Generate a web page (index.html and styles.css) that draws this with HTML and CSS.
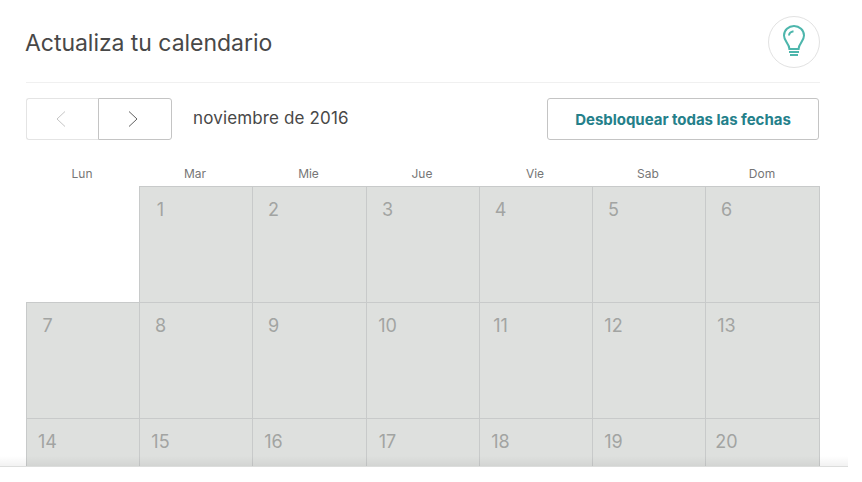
FILE: index.html
```html
<!DOCTYPE html>
<html lang="es">
<head>
<meta charset="utf-8">
<title>Actualiza tu calendario</title>
<link rel="stylesheet" href="styles.css">
</head>
<body>
<main class="panel">
  <header class="header">
    <h1 class="title"><span>Actualiza tu calendario</span></h1>
    <button class="tip" aria-label="Consejos">
      <svg width="24" height="34" viewBox="0 0 24 34" fill="none" stroke="#4db6ac" stroke-width="2">
        <path d="M7.400 25C7.200 19 2 17.500 2 11.500A10 9.500 0 0 1 22 11.500C22 17.500 16.800 19 16.600 25Z"/>
        <path d="M7 11.500Q7.300 8 11.500 7.300"/>
        <path d="M7 28H17M8 31H16"/>
      </svg>
    </button>
  </header>
  <div class="toolbar">
    <div class="pager">
      <button class="prev" aria-label="Anterior"><svg width="10" height="16" viewBox="0 0 10 16" fill="none" stroke="currentColor"><path d="M9 .5L1 8L9 15.500"/></svg></button>
      <button class="next" aria-label="Siguiente"><svg width="10" height="16" viewBox="0 0 10 16" fill="none" stroke="currentColor"><path d="M1 .5L9 8L1 15.500"/></svg></button>
    </div>
    <h2 class="month"><span>noviembre de 2016</span></h2>
    <button class="unblock"><span>Desbloquear todas las fechas</span></button>
  </div>
  <div class="weekdays">
    <span>Lun</span><span>Mar</span><span>Mie</span><span>Jue</span><span>Vie</span><span>Sab</span><span>Dom</span>
  </div>
  <div class="days">
    <div class="empty"></div>
    <div class="day"><b>1</b></div><div class="day"><b>2</b></div><div class="day"><b>3</b></div><div class="day"><b>4</b></div><div class="day"><b>5</b></div><div class="day"><b>6</b></div>
    <div class="day"><b>7</b></div><div class="day"><b>8</b></div><div class="day"><b>9</b></div><div class="day"><b>10</b></div><div class="day"><b>11</b></div><div class="day"><b>12</b></div><div class="day"><b>13</b></div>
    <div class="day"><b>14</b></div><div class="day"><b>15</b></div><div class="day"><b>16</b></div><div class="day"><b>17</b></div><div class="day"><b>18</b></div><div class="day"><b>19</b></div><div class="day"><b>20</b></div>
  </div>
</main>
</body>
</html>
```

FILE: styles.css
```css
* { box-sizing: border-box; }
body { margin: 0; background: #fff; color: #484848; font-family: Inter, "Liberation Sans", sans-serif; overflow: hidden; }
button { padding: 0; background: #fff; font: inherit; }
.panel { position: relative; width: 848px; height: 467px; padding: 0 28px 0 26px; overflow: hidden; border-bottom: 1px solid #dcdddc; }
.panel::after { content: ""; position: absolute; inset: auto 0 0; height: 10px; background: linear-gradient(transparent, rgba(0, 0, 0, .05)); }
.header { display: flex; justify-content: space-between; height: 83px; padding-top: 16px; border-bottom: 1px solid #f0f0f0; }
.title { margin: 11px 0 0 -1px; font-size: 23px; line-height: 32px; font-weight: 400; letter-spacing: -.04px; }
.tip { display: flex; justify-content: center; width: 52px; height: 52px; padding-top: 7px; border: 1px solid #e2e2e2; border-radius: 50%; }
.toolbar { display: flex; height: 57px; padding-top: 15px; }
.pager { display: flex; width: 146px; height: 42px; }
.prev, .next { display: flex; align-items: center; justify-content: center; border: 1px solid #c4c4c4; }
.prev { width: 72px; color: #c4c4c4; border-color: #e4e4e4; border-right: 0; border-radius: 3px 0 0 3px; padding-right: 3px; }
.next { width: 74px; color: #606060; border-radius: 0 3px 3px 0; padding-right: 5px; }
.month { margin: 8px 0 0 21px; font-size: 17px; line-height: 24px; font-weight: 400; letter-spacing: .14px; }
.unblock { width: 272px; height: 42px; margin-left: auto; margin-right: 1px; border: 1px solid #c4c4c4; border-radius: 3px; color: #24808a; font-size: 15px; font-weight: 700; letter-spacing: -.03px; }
.weekdays, .days { display: grid; grid-template-columns: 113px 113px 114px 113px 113px 113px 115px; }
.weekdays { height: 46px; padding-top: 25px; font-size: 12px; line-height: 18px; text-align: center; color: #767676; }
.weekdays span { padding-right: 1px; }
.days { grid-auto-rows: 116px; }
.day { background: #dee0de; border-left: 1px solid #c8caca; border-top: 1px solid #c8caca; }
.day:nth-child(7n) { border-right: 1px solid #c8caca; }
.day b { display: block; width: 41px; padding-top: 11px; text-align: center; font-size: 18px; line-height: 24px; font-weight: 400; color: #a2a4a2; }
```
